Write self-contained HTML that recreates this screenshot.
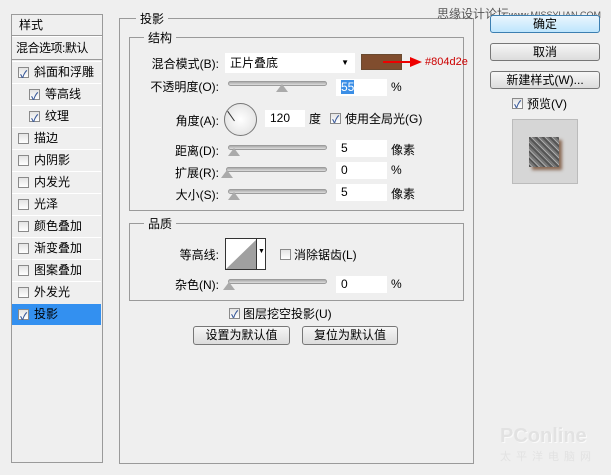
<!DOCTYPE html><html><head><meta charset="utf-8"><style>
*{margin:0;padding:0;box-sizing:border-box}
body{width:611px;height:475px;background:#efefef;position:relative;overflow:hidden;font:12px "Liberation Sans","Noto Sans CJK SC",sans-serif;color:#000}
.a{position:absolute}
.cb{position:absolute;width:11px;height:11px;border:1px solid #8a8a8a;background:linear-gradient(#e4e4e4,#fff)}
.cb.k::after{content:"✓";position:absolute;left:1px;top:-3px;font-size:10px;color:#3a5a9a;font-weight:bold}
.row{position:absolute;left:12px;width:89px;height:22px;border-top:1px solid #fff;line-height:21px;padding-left:22px}
.row .cb{left:6px;top:5px}
.gb{position:absolute;border:1px solid #9a9a9a}
.lg{position:absolute;background:#efefef;padding:0 4px;font-size:12px;top:-9px}
.sl{position:absolute;height:5px;border:1px solid #9c9c9c;border-radius:3px;background:linear-gradient(#aaa,#ddd)}
.th{position:absolute;width:0;height:0;border-left:6px solid transparent;border-right:6px solid transparent;border-bottom:8px solid #aaa}
.in{position:absolute;background:#fff;height:17px;line-height:17px;padding-left:5px;font-size:12px}
.lb{position:absolute;text-align:right;width:120px}
.btn{position:absolute;border:1px solid #777;border-radius:3px;background:linear-gradient(#f6f6f6,#dcdcdc);text-align:center;line-height:16px}
</style></head><body>
<div class="a" style="left:11px;top:14px;width:92px;height:449px;border:1px solid #9a9a9a;background:#efefef"></div>
<div class="a" style="left:19px;top:16px">样式</div>
<div class="a" style="left:12px;top:35px;width:90px;border-top:1px solid #9a9a9a;border-bottom:1px solid #fff"></div>
<div class="a" style="left:16px;top:39px;letter-spacing:-.5px">混合选项:默认</div>
<div class="a" style="left:12px;top:59px;width:90px;border-top:1px solid #9a9a9a"></div>
<div class="row" style="top:61px"><span class="cb k"></span>斜面和浮雕</div>
<div class="row" style="top:83px;padding-left:33px"><span class="cb k" style="left:17px"></span>等高线</div>
<div class="row" style="top:105px;padding-left:33px"><span class="cb k" style="left:17px"></span>纹理</div>
<div class="row" style="top:127px"><span class="cb"></span>描边</div>
<div class="row" style="top:149px"><span class="cb"></span>内阴影</div>
<div class="row" style="top:171px"><span class="cb"></span>内发光</div>
<div class="row" style="top:193px"><span class="cb"></span>光泽</div>
<div class="row" style="top:215px"><span class="cb"></span>颜色叠加</div>
<div class="row" style="top:237px"><span class="cb"></span>渐变叠加</div>
<div class="row" style="top:259px"><span class="cb"></span>图案叠加</div>
<div class="row" style="top:281px"><span class="cb"></span>外发光</div>
<div class="row" style="top:304px;background:#3390f0;border-top:none;height:21px"><span class="cb k"></span>投影</div>
<div class="gb" style="left:119px;top:18px;width:355px;height:446px"><span class="lg" style="left:16px">投影</span></div>
<div class="gb" style="left:129px;top:37px;width:335px;height:174px"><span class="lg" style="left:14px">结构</span></div>
<div class="lb" style="left:99px;top:55px">混合模式(B):</div>
<div class="in" style="left:225px;top:53px;width:130px;height:20px;line-height:20px">正片叠底<span class="a" style="right:6px;top:0;font-size:8px">▼</span></div>
<div class="a" style="left:361px;top:54px;width:41px;height:16px;background:#804d2e;border:1px solid #6a4a30"></div>
<div class="a" style="left:383px;top:61px;width:28px;height:2px;background:#e00"></div>
<div class="a" style="left:410px;top:57px;border-left:12px solid #e00;border-top:5px solid transparent;border-bottom:5px solid transparent"></div>
<div class="a" style="left:425px;top:56px;color:#c00;font-size:11px">#804d2e</div>
<div class="a" style="left:437px;top:5px;color:#555;font-size:12px">思缘设计论坛<span style="font-size:9px">www.MISSYUAN.COM</span></div>
<div class="lb" style="left:99px;top:78px">不透明度(O):</div>
<div class="sl" style="left:228px;top:81px;width:99px"></div><div class="th" style="left:276px;top:84px"></div>
<div class="in" style="left:336px;top:79px;width:51px"><span style="background:#3a8ee6;color:#fff">55</span></div>
<div class="a" style="left:391px;top:80px">%</div>
<div class="lb" style="left:99px;top:112px">角度(A):</div>
<div class="a" style="left:224px;top:103px;width:33px;height:33px;border:1px solid #777;border-radius:50%;background:radial-gradient(#fff,#ddd)"></div>
<div class="a" style="left:234px;top:109px;width:1px;height:12px;background:#333;transform:rotate(-35deg);transform-origin:bottom"></div>
<div class="in" style="left:265px;top:110px;width:40px">120</div>
<div class="a" style="left:309px;top:110px">度</div>
<div class="cb k" style="left:330px;top:113px"></div>
<div class="a" style="left:345px;top:110px">使用全局光(G)</div>
<div class="lb" style="left:99px;top:142px">距离(D):</div>
<div class="sl" style="left:228px;top:145px;width:99px"></div><div class="th" style="left:228px;top:148px"></div>
<div class="in" style="left:336px;top:140px;width:51px">5</div><div class="a" style="left:391px;top:141px">像素</div>
<div class="lb" style="left:99px;top:164px">扩展(R):</div>
<div class="sl" style="left:226px;top:167px;width:101px"></div><div class="th" style="left:221px;top:170px"></div>
<div class="in" style="left:336px;top:162px;width:51px">0</div><div class="a" style="left:391px;top:163px">%</div>
<div class="lb" style="left:99px;top:186px">大小(S):</div>
<div class="sl" style="left:228px;top:189px;width:99px"></div><div class="th" style="left:228px;top:192px"></div>
<div class="in" style="left:336px;top:184px;width:51px">5</div><div class="a" style="left:391px;top:185px">像素</div>
<div class="gb" style="left:129px;top:223px;width:335px;height:78px"><span class="lg" style="left:14px">品质</span></div>
<div class="lb" style="left:99px;top:246px">等高线:</div>
<div class="a" style="left:225px;top:238px;width:41px;height:32px;border:1px solid #333;background:#fff;overflow:hidden"><svg width="31" height="30" style="position:absolute;left:0;top:0"><polygon points="0,30 31,0 31,30" fill="#a0a0a0"/></svg><div class="a" style="left:30px;top:0;width:1px;height:30px;background:#333"></div><span class="a" style="left:32px;top:9px;font-size:7px">▼</span></div>
<div class="cb" style="left:280px;top:249px"></div><div class="a" style="left:294px;top:246px">消除锯齿(L)</div>
<div class="lb" style="left:99px;top:276px">杂色(N):</div>
<div class="sl" style="left:228px;top:279px;width:99px"></div><div class="th" style="left:223px;top:282px"></div>
<div class="in" style="left:336px;top:276px;width:51px">0</div><div class="a" style="left:391px;top:277px">%</div>
<div class="cb k" style="left:229px;top:308px"></div><div class="a" style="left:243px;top:305px">图层挖空投影(U)</div>
<div class="btn" style="left:193px;top:326px;width:97px;height:19px">设置为默认值</div>
<div class="btn" style="left:302px;top:326px;width:96px;height:19px">复位为默认值</div>
<div class="btn" style="left:490px;top:15px;width:110px;height:18px;border-color:#3c7fb1;background:linear-gradient(#eaf6fd,#bee6fd)">确定</div>
<div class="btn" style="left:490px;top:43px;width:110px;height:18px">取消</div>
<div class="btn" style="left:490px;top:71px;width:110px;height:18px">新建样式(W)...</div>
<div class="cb k" style="left:512px;top:98px"></div><div class="a" style="left:527px;top:95px">预览(V)</div>
<div class="a" style="left:512px;top:119px;width:66px;height:65px;background:#d6d6d6;border:1px solid #bbb"></div>
<div class="a" style="left:529px;top:137px;width:30px;height:30px;background:repeating-linear-gradient(45deg,#555 0 2px,#aaa 2px 3px,#777 3px 5px);box-shadow:3px 3px 3px #8a6a55"></div>
<div class="a" style="left:500px;top:425px;color:#e2e2e2;font-size:20px;font-weight:bold;text-shadow:1px 1px #fafafa">PConline</div>
<div class="a" style="left:500px;top:448px;color:#e2e2e2;font-size:11px;letter-spacing:5px">太平洋电脑网</div>
</body></html>
